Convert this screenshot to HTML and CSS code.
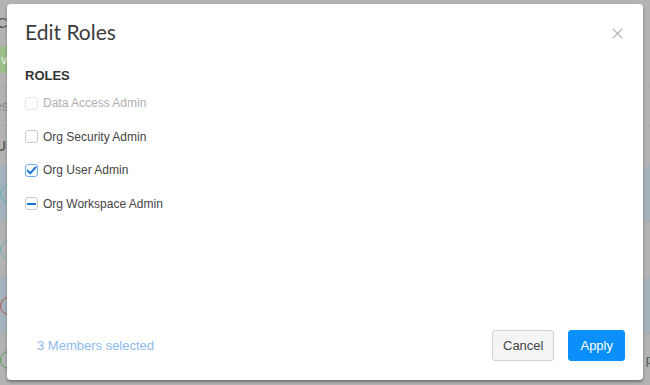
FILE: index.html
```html
<!DOCTYPE html>
<html>
<head>
<meta charset="utf-8">
<link rel="stylesheet" href="styles.css">
</head>
<body>
<div class="page">
  <div class="pg-top"><span class="pg-title">Co</span></div>
  <div class="pg-actions"><span class="pg-btn">v</span></div>
  <div class="pg-search"><span class="pg-search-text">es</span></div>
  <div class="pg-head"><span class="pg-head-text">U</span></div>
  <div class="pg-row band"><span class="avatar teal"></span></div>
  <div class="pg-row"><span class="avatar teal"></span></div>
  <div class="pg-row band"><span class="avatar red"></span></div>
  <div class="pg-row last"><span class="avatar green"></span><span class="pg-right">p</span></div>
</div>

<div class="modal">
  <div class="modal-header">
    <h1 class="modal-title">Edit Roles</h1>
    <span class="close">
      <svg width="11" height="11" viewBox="0 0 11 11"><path d="M0.8 0.8 L10.2 10.2 M10.2 0.8 L0.8 10.2" stroke="#bdbdbd" stroke-width="1.5" fill="none"/></svg>
    </span>
  </div>
  <div class="modal-body">
    <div class="section-title">ROLES</div>
    <div class="role-list">
      <label class="role disabled"><span class="box"></span><span class="role-name">Data Access Admin</span></label>
      <label class="role"><span class="box"></span><span class="role-name">Org Security Admin</span></label>
      <label class="role"><span class="box checked"><svg width="13" height="13" viewBox="0 0 13 13"><path d="M2.6 6.6 L5.2 9.2 L10.6 3.4" stroke="#1a73dc" stroke-width="2" fill="none" stroke-linecap="round" stroke-linejoin="round"/></svg></span><span class="role-name">Org User Admin</span></label>
      <label class="role"><span class="box"><span class="dash"></span></span><span class="role-name">Org Workspace Admin</span></label>
    </div>
  </div>
  <div class="modal-footer">
    <span class="selected">3 Members selected</span>
    <div class="buttons">
      <button class="btn btn-cancel">Cancel</button>
      <button class="btn btn-apply">Apply</button>
    </div>
  </div>
</div>
</body>
</html>
```

FILE: styles.css
```css
html, body {
  margin: 0;
  padding: 0;
}
body {
  width: 650px;
  height: 385px;
  overflow: hidden;
  background: #b3b3b3;
  font-family: "Liberation Sans", Arial, sans-serif;
  position: relative;
}
.page {
  display: flex;
  flex-direction: column;
  height: 385px;
}
.pg-top {
  height: 40px;
  display: flex;
  align-items: center;
  padding-top: 2px;
}
.pg-title {
  font-size: 15px;
  color: #555;
  margin-left: -3px;
}
.pg-actions {
  height: 44px;
  display: flex;
  align-items: flex-start;
  padding-top: 4px;
  box-sizing: border-box;
}
.pg-btn {
  display: block;
  width: 80px;
  height: 27px;
  background: #9dbd89;
  color: #e6eedf;
  font-size: 13px;
  line-height: 27px;
  padding-left: 1px;
}
.pg-search {
  height: 38px;
  border-top: 1px solid #a9a9a9;
  border-bottom: 1px solid #a9a9a9;
  display: flex;
  align-items: center;
}
.pg-search-text {
  font-size: 14px;
  color: #8a8a8a;
  margin-left: -6px;
}
.pg-head {
  height: 40px;
  display: flex;
  align-items: center;
}
.pg-head-text {
  font-size: 14px;
  font-weight: bold;
  color: #666;
  margin-left: -4px;
}
.pg-row {
  height: 55px;
  display: flex;
  align-items: center;
  justify-content: space-between;
  border-bottom: 1px solid #aaaaaa;
}
.pg-row.band {
  background: #a4b2bc;
}
.pg-row.last {
  border-bottom: none;
  flex: 1;
}
.avatar {
  width: 16px;
  height: 16px;
  border: 1.5px solid #5fb3ae;
  border-radius: 50%;
  margin-left: 0;
}
.avatar.red { border-color: #b25452; }
.avatar.green { border-color: #5b9a5b; }
.pg-right {
  font-size: 13px;
  color: #555;
  margin-right: -3px;
}

.modal {
  position: absolute;
  left: 7px;
  top: 4px;
  width: 636px;
  height: 376px;
  background: #fff;
  border-radius: 4px;
  box-shadow: 0 2px 3px rgba(0, 0, 0, 0.35);
  display: flex;
  flex-direction: column;
  box-sizing: border-box;
}
.modal-header {
  display: flex;
  align-items: center;
  justify-content: space-between;
  padding: 15px 20px 0 18px;
}
.modal-title {
  margin: 0;
  font-family: Lato, "Liberation Sans", sans-serif;
  font-weight: 400;
  font-size: 21px;
  line-height: 26px;
  color: #3c3c3c;
}
.close {
  display: flex;
  width: 11px;
  height: 11px;
  margin-top: 2px;
}
.modal-body {
  flex: 1;
  padding: 23px 18px 0 18px;
}
.section-title {
  font-size: 13px;
  font-weight: bold;
  color: #333;
  line-height: 16px;
}
.role-list {
  display: flex;
  flex-direction: column;
  gap: 13.6px;
  margin-top: 9px;
}
.role {
  display: flex;
  align-items: center;
  height: 20px;
  gap: 5px;
}
.box {
  width: 13px;
  height: 13px;
  box-sizing: border-box;
  border: 1px solid #c9c9c9;
  border-radius: 3px;
  background: #fff;
  display: flex;
  align-items: center;
  justify-content: center;
  position: relative;
}
.box svg {
  position: absolute;
  left: -1px;
  top: -1px;
}
.box.checked {
  border-color: #6eaaf0;
}
.dash {
  width: 9px;
  height: 2px;
  background: #1a73dc;
}
.role.disabled .box {
  border-color: #e6e6e6;
}
.role-name {
  font-size: 12px;
  color: #444;
}
.role.disabled .role-name {
  color: #b0b0b0;
}
.modal-footer {
  display: flex;
  align-items: center;
  justify-content: space-between;
  padding: 0 18px 19px 30px;
}
.selected {
  font-size: 13px;
  color: #8dbbec;
}
.buttons {
  display: flex;
  gap: 14px;
}
.btn {
  font-family: "Liberation Sans", Arial, sans-serif;
  font-size: 13px;
  height: 31px;
  border-radius: 3px;
  border: 1px solid #d2d2d2;
  padding: 0 10px;
  margin: 0;
}
.btn-cancel {
  background: #f4f4f4;
  color: #444;
}
.btn-apply {
  background: #0b8ffa;
  border-color: #0b8ffa;
  color: #fff;
  padding: 0 11px;
}
```
